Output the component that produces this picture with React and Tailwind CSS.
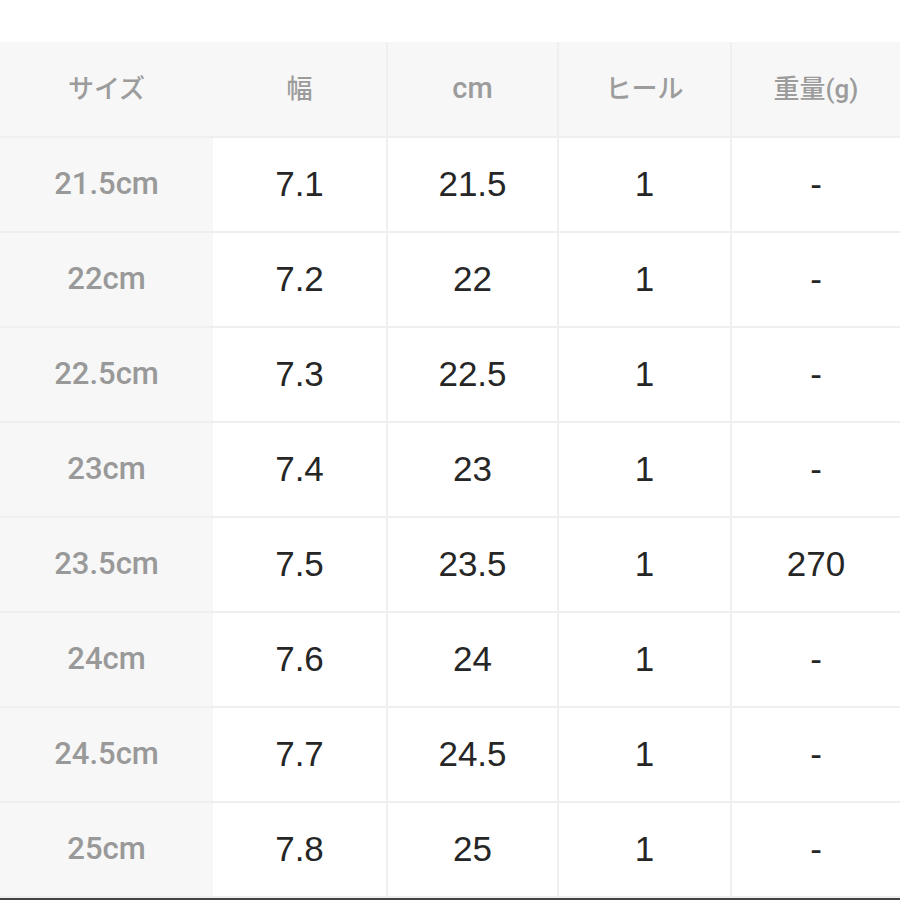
import React from "react";

const rows = [
  ["21.5cm", "7.1", "21.5", "1", "-"],
  ["22cm", "7.2", "22", "1", "-"],
  ["22.5cm", "7.3", "22.5", "1", "-"],
  ["23cm", "7.4", "23", "1", "-"],
  ["23.5cm", "7.5", "23.5", "1", "270"],
  ["24cm", "7.6", "24", "1", "-"],
  ["24.5cm", "7.7", "24.5", "1", "-"],
  ["25cm", "7.8", "25", "1", "-"],
];

const headers = ["サイズ", "幅", "cm", "ヒール", "重量(g)"];

function App() {
  return (
    <div
      className="w-[900px] h-[900px] bg-white overflow-hidden"
      style={{ fontFamily: '"Liberation Sans", "Noto Sans CJK JP", sans-serif' }}
    >
      <div className="h-[42px]" />
      <div className="grid grid-cols-[213px_173px_171px_173px_170px]">
        {headers.map((h, i) => (
          <div
            key={h}
            className={
              "h-[96px] bg-[#f7f7f7] border-b-2 border-[#efefef] flex items-center justify-center font-[Roboto,'Noto_Sans_CJK_JP',sans-serif] font-medium text-[#9c9c9c] " +
              (i === 2 ? "text-[29px]" : "text-[26px]") +
              (i > 1 ? " border-l-2" : "")
            }
          >
            {h}
          </div>
        ))}
        {rows.map((r) =>
          r.map((v, i) => (
            <div
              key={r[0] + i}
              className={
                "h-[95px] border-b-2 border-[#efefef] flex items-center justify-center " +
                (i === 0
                  ? "bg-[#f7f7f7] font-[Roboto,sans-serif] font-medium text-[31px] text-[#999999]"
                  : "bg-white text-[35px] text-[#262626]") +
                (i > 1 ? " border-l-2" : "")
              }
            >
              {v}
            </div>
          ))
        )}
      </div>
      <div className="h-[2px] bg-[#444444]" />
    </div>
  );
}

export default App;
